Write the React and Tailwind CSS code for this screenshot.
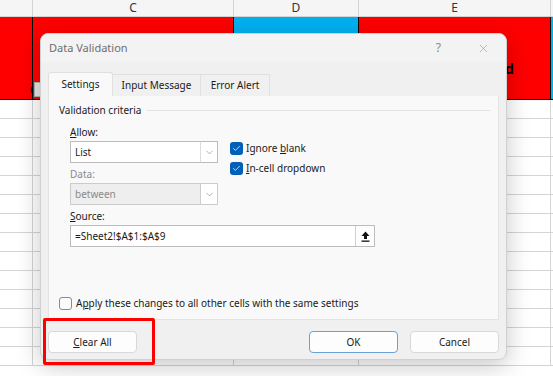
import { ChevronDown, Check, X } from "lucide-react";

const ROWS = Array.from({ length: 14 });

function Cell({ className = "" }) {
  return <div className={`h-full border-r border-[#d4d4d4] ${className}`} />;
}

function Checkbox({ checked }) {
  if (checked) {
    return (
      <span className="w-[13px] h-[13px] rounded-[3px] bg-[#005fb8] flex items-center justify-center shrink-0">
        <Check size={9} strokeWidth={2} className="text-white" />
      </span>
    );
  }
  return (
    <span className="w-[13px] h-[13px] rounded-[3px] border border-[#8a8a8a] bg-[#fbfbfb] shrink-0" />
  );
}

function Select({ value, disabled }) {
  return (
    <div
      className={`w-[148px] h-[22px] flex border ${
        disabled ? "border-[#cccccc] bg-[#eeeeee] text-[#8a8a8a]" : "border-[#bcbcbc] bg-white text-[#1a1a1a]"
      }`}
    >
      <span className="flex-1 px-[4px] leading-[20px]">{value}</span>
      <span className={`w-[17px] flex items-center justify-center border-l ${disabled ? "border-[#cccccc] bg-white" : "border-[#dcdcdc]"}`}>
        <ChevronDown size={11} strokeWidth={1.2} className="text-[#707070]" />
      </span>
    </div>
  );
}

function Button({ children, primary }) {
  return (
    <button
      className={`w-[89px] h-[22px] rounded-[4px] bg-[#fdfdfd] text-[#1a1a1a] border ${
        primary ? "border-[#6aa0d6]" : "border-[#d8d8d8]"
      }`}
    >
      {children}
    </button>
  );
}

export default function App() {
  return (
    <div
      className="relative w-[553px] h-[376px] overflow-hidden bg-white text-[10px]"
      style={{ fontFamily: '"Segoe UI", "Noto Sans", sans-serif' }}
    >
      {/* Spreadsheet behind */}
      <div className="flex flex-col">
        <div className="flex h-[17px] bg-[#f5f5f5] border-b border-[#d4d4d4] text-[#333] text-[12px]">
          <div className="w-[33px] border-r border-[#d4d4d4]" />
          <div className="w-[201px] border-r border-[#d4d4d4] flex items-center justify-center">C</div>
          <div className="w-[125px] border-r border-[#d4d4d4] flex items-center justify-center">D</div>
          <div className="w-[192px] border-r border-[#d4d4d4] flex items-center justify-center">E</div>
          <div className="flex-1" />
        </div>
        <div className="flex h-[83px] border-b border-black text-black font-bold text-[14px]">
          <div className="w-[33px] bg-[#ff0000] border-r border-black flex items-end justify-end">
            <span className="-mr-[6px] leading-[20px]">e</span>
          </div>
          <div className="w-[201px] bg-[#ff0000] border-r border-black" />
          <div className="w-[125px] bg-[#00b0f0] border-r border-black" />
          <div className="w-[192px] bg-[#ff0000] border-r border-black flex items-center">
            <span className="ml-[146px] mt-[20px]">d</span>
          </div>
          <div className="flex-1 bg-[#00b0f0]" />
        </div>
        {ROWS.map((_, i) => (
          <div key={i} className="flex h-[19px] border-b border-[#d4d4d4]">
            <Cell className="w-[33px]" />
            <Cell className="w-[201px]" />
            <Cell className="w-[125px]" />
            <Cell className="w-[192px]" />
            <div className="flex-1" />
          </div>
        ))}
      </div>

      {/* small filter button under the dialog */}
      <div className="absolute left-[34px] top-[82px] w-[8px] h-[15px] bg-[#e6e6e6] border border-[#b0b0b0]" />

      {/* Dialog */}
      <div className="absolute left-[40px] top-[33px] w-[467px] h-[327px] rounded-[8px] bg-[#f0f0f0] border border-[#d0d0d0] shadow-[0_6px_24px_rgba(0,0,0,0.22)] flex flex-col">
        <div className="h-[28px] flex items-center justify-between pl-[8px] pr-[16px] rounded-t-[8px] bg-[#f3f3f3]">
          <span className="text-[11px] text-[#6e6e6e]">Data Validation</span>
          <div className="flex items-center gap-[36px] text-[#8a8a8a]">
            <span className="text-[12px]">?</span>
            <X size={13} strokeWidth={1} />
          </div>
        </div>

        <div className="px-[7px] pt-[10px] flex flex-col">
          {/* tabs */}
          <div className="flex items-end h-[24px] text-[#1a1a1a]">
            <div className="w-[65px] h-[24px] bg-[#f9f9f9] border border-b-0 border-[#e0e0e0] rounded-t-[3px] flex items-center justify-center">
              Settings
            </div>
            <div className="w-[88px] h-[22px] border-t border-r border-[#e0e0e0] flex items-center justify-center">
              Input Message
            </div>
            <div className="w-[69px] h-[22px] border-t border-r border-[#e0e0e0] flex items-center justify-center">
              Error Alert
            </div>
          </div>

          {/* panel */}
          <div className="h-[224px] bg-[#f9f9f9] border border-t-0 border-[#e4e4e4] flex flex-col pl-[10px] pr-[8px] text-[#1a1a1a]">
            <div className="flex items-center gap-[6px] h-[28px] shrink-0">
              <span>Validation criteria</span>
              <div className="flex-1 h-px bg-[#e2e2e2]" />
            </div>

            <div className="flex pl-[11px]">
              <div className="flex flex-col w-[160px]">
                <span className="h-[16px] leading-[16px]">
                  <u>A</u>llow:
                </span>
                <div className="mt-[1px]">
                  <Select value="List" />
                </div>
                <span className="h-[16px] leading-[16px] mt-[3px] text-[#8a8a8a]">Data:</span>
                <div className="mt-[1px]">
                  <Select value="between" disabled />
                </div>
              </div>
              <div className="flex flex-col gap-[7px] mt-[18px]">
                <label className="flex items-center gap-[3px] h-[13px]">
                  <Checkbox checked />
                  <span>
                    Ignore <u>b</u>lank
                  </span>
                </label>
                <label className="flex items-center gap-[3px] h-[13px]">
                  <Checkbox checked />
                  <span>
                    <u>I</u>n-cell dropdown
                  </span>
                </label>
              </div>
            </div>

            <div className="pl-[11px] flex flex-col">
              <span className="h-[16px] leading-[16px] mt-[3px]">
                <u>S</u>ource:
              </span>
              <div className="mt-[1px] w-[305px] h-[22px] flex border border-[#bcbcbc] bg-white">
                <span className="flex-1 px-[4px] leading-[20px]">=Sheet2!$A$1:$A$9</span>
                <span className="w-[19px] flex items-center justify-center border-l border-[#d0d0d0] bg-[#fdfdfd]">
                  <svg width="9" height="11" viewBox="0 0 9 11">
                    <path d="M4.5 0.5 L8.5 5 H6 V8 H3 V5 H0.5 Z" fill="#111" />
                    <rect x="0.5" y="9.5" width="8" height="1.3" fill="#111" />
                  </svg>
                </span>
              </div>
            </div>

            <label className="flex items-center gap-[4px] mt-[50px] h-[13px]">
              <Checkbox />
              <span>
                A<u>p</u>ply these changes to all other cells with the same settings
              </span>
            </label>
          </div>

          {/* footer */}
          <div className="flex items-start justify-between pt-[11px]">
            <Button>
              <u>C</u>lear All
            </Button>
            <div className="flex gap-[12px]">
              <Button primary>OK</Button>
              <Button>Cancel</Button>
            </div>
          </div>
        </div>
      </div>

      {/* red highlight */}
      <div className="absolute left-[43px] top-[318px] w-[112px] h-[47px] border-[3px] border-[#ff0000] rounded-[2px]" />
    </div>
  );
}
